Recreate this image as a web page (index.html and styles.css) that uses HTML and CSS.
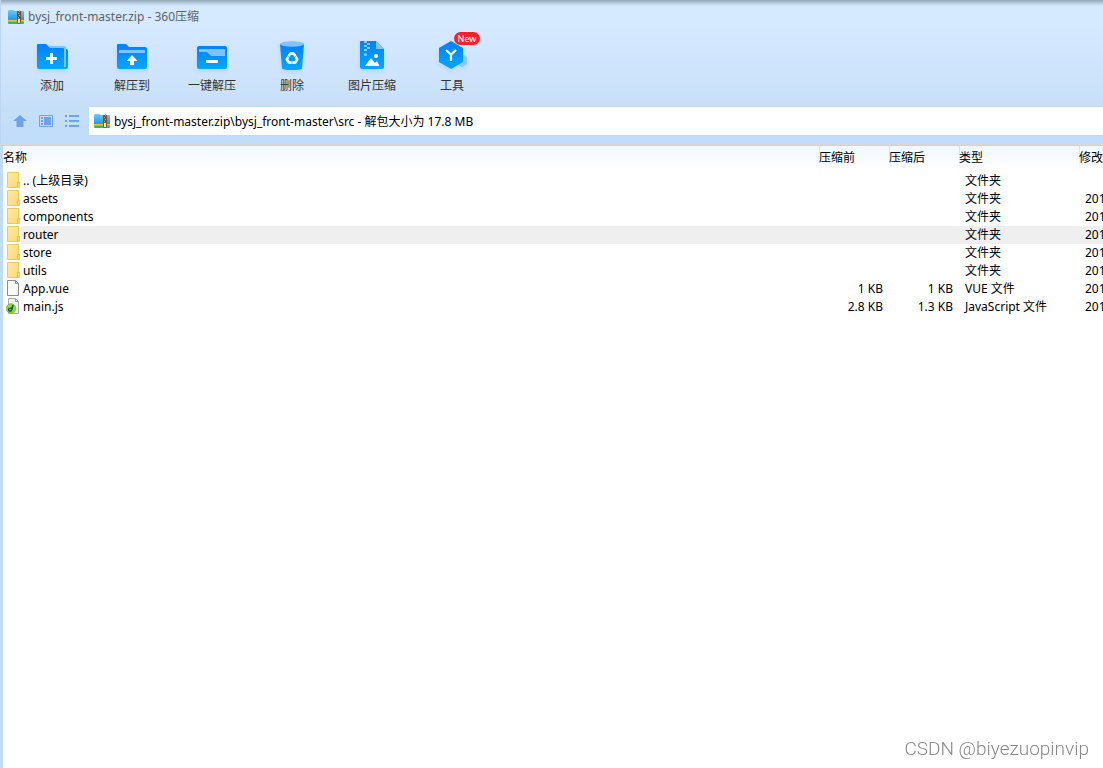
FILE: index.html
```html
<!DOCTYPE html>
<html lang="zh-CN">
<head>
<meta charset="utf-8">
<title>bysj_front-master.zip - 360压缩</title>
<link rel="stylesheet" href="styles.css">
</head>
<body>
<svg class="defs" aria-hidden="true">
  <defs>
    <linearGradient id="blue" x1="0" y1="0" x2="0" y2="1"><stop offset="0" stop-color="#0080ff"/><stop offset="1" stop-color="#00a8ff"/></linearGradient>
    <linearGradient id="sky" x1="0" y1="0" x2="0" y2="1"><stop offset="0" stop-color="#6cc8f8"/><stop offset="1" stop-color="#1d98ee"/></linearGradient>
    <linearGradient id="gold" x1="0" y1="0" x2="1" y2="1"><stop offset="0" stop-color="#ffeaa0"/><stop offset="1" stop-color="#fbd96c"/></linearGradient>
    <symbol id="zip" viewBox="0 0 16 14">
      <path d="M0 1.500Q0 0 1.500 0H5l2 1h8q1 0 1 1v8H0z" fill="url(#sky)"/>
      <path d="M0 10h16v2H0z" fill="#ff9417"/><path d="M0 10h16v1H0z" fill="#ffc331"/>
      <path d="M0 12h16v1q0 1-1 1H1q-1 0-1-1z" fill="#38b765"/>
      <path d="M9 1h4v9H9z" fill="#8b4b1d"/><path d="M11 0h1v2h-1zM10 3h1v1h-1zM11 5h1v1h-1zM10 7h1v1h-1z" fill="#e9a15a"/>
      <rect x="9.500" y="8.500" width="3" height="5" rx="1" fill="#ffe9c4" stroke="#78431e"/>
    </symbol>
    <symbol id="folder" viewBox="0 0 14 16">
      <path d="M1.500 .5h11v9.500h1v5.500h-12z" fill="url(#gold)" stroke="#ecc95b"/>
      <path d="M11.500 15V10.500h2" fill="none" stroke="#e7bd44"/>
    </symbol>
  </defs>
</svg>
<div class="window">
  <header class="chrome">
    <div class="titlebar"><svg class="zip-icon"><use href="#zip"/></svg><h1>bysj_front-master.zip - 360压缩</h1></div>
    <nav class="toolbar" aria-label="工具栏">
      <button class="tool" type="button">
        <svg viewBox="0 0 32 32"><path d="M1 4q0-1 1-1h8l3 3h16q1 0 1 1v1q2 0 2 2v16q0 2-2 2H3q-2 0-2-2z" fill="url(#blue)"/><path d="M12 5h16q2 0 2 2v19h-2V8q0-1-1-1H14z" fill="#80c3ff"/><path d="M15.500 12v11M10 17.500h11" stroke="#fff" stroke-width="3"/></svg>
        <span>添加</span>
      </button>
      <button class="tool" type="button">
        <svg viewBox="0 0 32 32"><path d="M1 4q0-1 1-1h8l3 3h16q2 0 2 2v18q0 2-2 2H3q-2 0-2-2z" fill="url(#blue)"/><path d="M3 12v-2q0-1 1-1h24q1 0 1 1v2z" fill="#80c3ff"/><path d="M16 14l5.500 6H18v4h-4v-4h-3.500z" fill="#fff"/></svg>
        <span>解压到</span>
      </button>
      <button class="tool" type="button">
        <svg viewBox="0 0 32 32"><rect x="1" y="5" width="30" height="23" rx="2" fill="url(#blue)"/><path d="M3 11V9q0-1 1-1h24q1 0 1 1v6H15l-4-4z" fill="#80c3ff"/><rect x="10" y="19" width="12" height="3" rx="1" fill="#fff"/></svg>
        <span>一键解压</span>
      </button>
      <button class="tool" type="button">
        <svg viewBox="0 0 32 32"><path d="M4 3h24l-2 24q0 2-10 2T6 27z" fill="url(#blue)"/><ellipse cx="16" cy="3" rx="12" ry="2.800" fill="#80c3ff"/><g fill="none" stroke="#fff" stroke-width="2.600" stroke-linejoin="round"><path id="arc" d="M12.600 15.200l1.600-2.600h3.600l1.600 2.600"/><use href="#arc" transform="rotate(120 16 17.500)"/><use href="#arc" transform="rotate(240 16 17.500)"/></g></svg>
        <span>删除</span>
      </button>
      <button class="tool" type="button">
        <svg viewBox="0 0 32 32"><path d="M4 1q0-1 1-1h15l8 8v18q0 2-2 2H6q-2 0-2-2z" fill="url(#blue)"/><path d="M20 0l8 8h-8z" fill="#80c3ff"/><path d="M8 0h3v2H8zM11 2h3v2h-3zM8 4h3v2H8zM11 6h3v2h-3zM8 8h3v2H8z" fill="#8bcaff"/><circle cx="9.500" cy="13.500" r="1.600" fill="#7dc7ff"/><circle cx="20" cy="15" r="2" fill="#fff"/><path d="M9 25l6-8 4 5 2-2 2.500 5z" fill="#fff"/></svg>
        <span>图片压缩</span>
      </button>
      <button class="tool" type="button">
        <svg viewBox="0 0 32 32"><path d="M26 13l5 3v7l-5 3-6-3v-7z" fill="#8bc9ff"/><path d="M15 0l12 7v14l-12 7-12-7V7z" fill="url(#blue)"/><path d="M10 9l5 4.500L20 9M15 13.500V20" fill="none" stroke="#fff" stroke-width="2.200"/></svg>
        <span>工具</span><em class="badge">New</em>
      </button>
    </nav>
    <div class="address-row">
      <div class="nav-buttons">
        <button type="button" aria-label="上级目录"><svg viewBox="0 0 16 16"><path d="M8 2l7 6h-3.500v6h-7V8H1z" fill="#6da3ee"/></svg></button>
        <button type="button" aria-label="预览"><svg viewBox="0 0 16 16"><path d="M1.500 2.500h13v11h-13z" fill="none" stroke="#6da3ee"/><path d="M3 4h2v2H3zM3 7h2v2H3zM3 10h2v2H3zM6 4h7v8H6z" fill="#6da3ee"/></svg></button>
        <button type="button" aria-label="列表"><svg viewBox="0 0 16 16"><path d="M1 2h2v2H1zM5 2h10v2H5zM1 7h2v2H1zM5 7h10v2H5zM1 12h2v2H1zM5 12h10v2H5z" fill="#6da3ee"/></svg></button>
      </div>
      <div class="address"><svg class="zip-icon"><use href="#zip"/></svg><input type="text" aria-label="路径" value="bysj_front-master.zip\bysj_front-master\src - 解包大小为 17.8 MB"></div>
    </div>
  </header>
  <main class="listing">
    <table>
      <colgroup><col><col class="size"><col class="size"><col class="type"><col class="date"></colgroup>
      <thead><tr><th>名称</th><th>压缩前</th><th>压缩后</th><th>类型</th><th>修改</th></tr></thead>
      <tbody>
        <tr><td><div class="name"><svg><use href="#folder"/></svg><span>.. (上级目录)</span></div></td><td></td><td></td><td>文件夹</td><td></td></tr>
        <tr><td><div class="name"><svg><use href="#folder"/></svg><span>assets</span></div></td><td></td><td></td><td>文件夹</td><td>201</td></tr>
        <tr><td><div class="name"><svg><use href="#folder"/></svg><span>components</span></div></td><td></td><td></td><td>文件夹</td><td>201</td></tr>
        <tr class="current"><td><div class="name"><svg><use href="#folder"/></svg><span>router</span></div></td><td></td><td></td><td>文件夹</td><td>201</td></tr>
        <tr><td><div class="name"><svg><use href="#folder"/></svg><span>store</span></div></td><td></td><td></td><td>文件夹</td><td>201</td></tr>
        <tr><td><div class="name"><svg><use href="#folder"/></svg><span>utils</span></div></td><td></td><td></td><td>文件夹</td><td>201</td></tr>
        <tr><td><div class="name"><svg viewBox="0 0 14 16"><path d="M1.500.500h8l3 3v12h-11z" fill="#f9f9f9" stroke="#8c8c8c"/><path d="M9.500.500v3h3" fill="none" stroke="#8c8c8c"/></svg><span>App.vue</span></div></td><td>1 KB</td><td>1 KB</td><td>VUE 文件</td><td>201</td></tr>
        <tr><td><div class="name"><svg viewBox="0 0 14 16"><path d="M2.500.500h7l3 3v12h-10z" fill="#eee" stroke="#aaa"/><path d="M9.500.500v3h3" fill="none" stroke="#999"/><circle cx="5" cy="10.500" r="4.800" fill="#8fdc3c" stroke="#62ad28" stroke-width=".6"/><path d="M7 7L5.800 12q-.8 1.600-2.500 1Q2 11.500 3.300 10.500q1.200-.8 2.700 0" fill="none" stroke="#143c4c" stroke-width="1.300"/></svg><span>main.js</span></div></td><td>2.8 KB</td><td>1.3 KB</td><td>JavaScript 文件</td><td>201</td></tr>
      </tbody>
    </table>
  </main>
</div>
<div class="watermark">CSDN @biyezuopinvip</div>
</body>
</html>
```
FILE: styles.css
```css
* { box-sizing: border-box; }
body {
  margin: 0;
  font: 12px/18px "Noto Sans", "Noto Sans CJK SC", sans-serif;
  color: #000;
  background: #fff;
}
button, input { font: inherit; color: inherit; border: 0; padding: 0; background: none; }
.defs { position: absolute; width: 0; height: 0; }
.window { display: flex; flex-direction: column; min-height: 100vh; overflow: hidden; }
.chrome {
  border-bottom: 1px solid #bdd8f3;
  box-shadow: inset 0 -1px #d5d9de, inset 1px 0 #bcd6f1;
  background: linear-gradient(#93a6b8 0, #a9bfd3 2px, #d5eaff 6px, #d5eaff 24px, #cde3fc 80px, #c6dff8 108px, #c2ddf9 134px);
}
.titlebar { display: flex; align-items: center; gap: 4px; height: 33px; padding: 0 8px; }
.titlebar h1 { margin: 0; font-size: 12px; font-weight: normal; color: #5d6267; }
.zip-icon { width: 16px; height: 14px; flex: none; }
.toolbar { display: flex; height: 73px; padding: 8px 12px 0; }
.tool {
  position: relative;
  display: flex;
  flex-direction: column;
  align-items: center;
  gap: 4px;
  width: 80px;
  color: #333;
}
.tool svg { width: 32px; height: 32px; overflow: visible; filter: drop-shadow(0 2px 2px #86bdf366); }
.badge {
  position: absolute;
  left: 42px;
  top: -9px;
  width: 26px;
  border-radius: 7px;
  background: #f91f2b;
  color: #fff;
  font-size: 9px;
  font-style: normal;
  line-height: 13px;
}
.address-row { display: flex; align-items: center; padding-bottom: 9px; }
.nav-buttons { display: flex; gap: 10px; width: 89px; padding-left: 12px; }
.nav-buttons svg { display: block; width: 16px; height: 16px; }
.address {
  display: flex;
  flex: 1;
  align-items: center;
  gap: 4px;
  height: 30px;
  padding-left: 5px;
  background: #fff;
  border: solid #bdd9f3;
  border-width: 1px 0;
}
.address input { flex: 1; min-width: 0; padding-top: 2px; outline: 0; }
.listing {
  flex: 1;
  overflow: hidden;
  border-left: 3px solid #c1dcf7;
  background: linear-gradient(#f2f8ff, #fff 24px);
}
table { width: 100%; table-layout: fixed; border-collapse: collapse; }
.size { width: 70px; }
.type { width: 120px; }
.date { width: 24px; }
th, td { padding: 0; text-align: left; font-weight: normal; white-space: nowrap; }
th { height: 26px; padding-bottom: 2px; }
th + th { background: linear-gradient(#c8e2fb, #fff) no-repeat left / 1px 100%; }
td { height: 18px; }
td:nth-child(2), td:nth-child(3) { padding-right: 6px; text-align: right; }
td:nth-child(4), td:nth-child(5) { padding-left: 6px; }
.name { display: flex; align-items: flex-start; gap: 1px; padding-left: 3px; }
.name svg { width: 14px; height: 16px; flex: none; }
.name span { flex: 1; padding-left: 2px; }
.current .name span, .current td + td { background: #efefef; }
.watermark {
  position: fixed;
  right: 14px;
  bottom: 7px;
  font: 300 19px/24px Roboto, "Liberation Sans", sans-serif;
  color: #888;
  text-shadow: 1px 1px #fff;
}
```
